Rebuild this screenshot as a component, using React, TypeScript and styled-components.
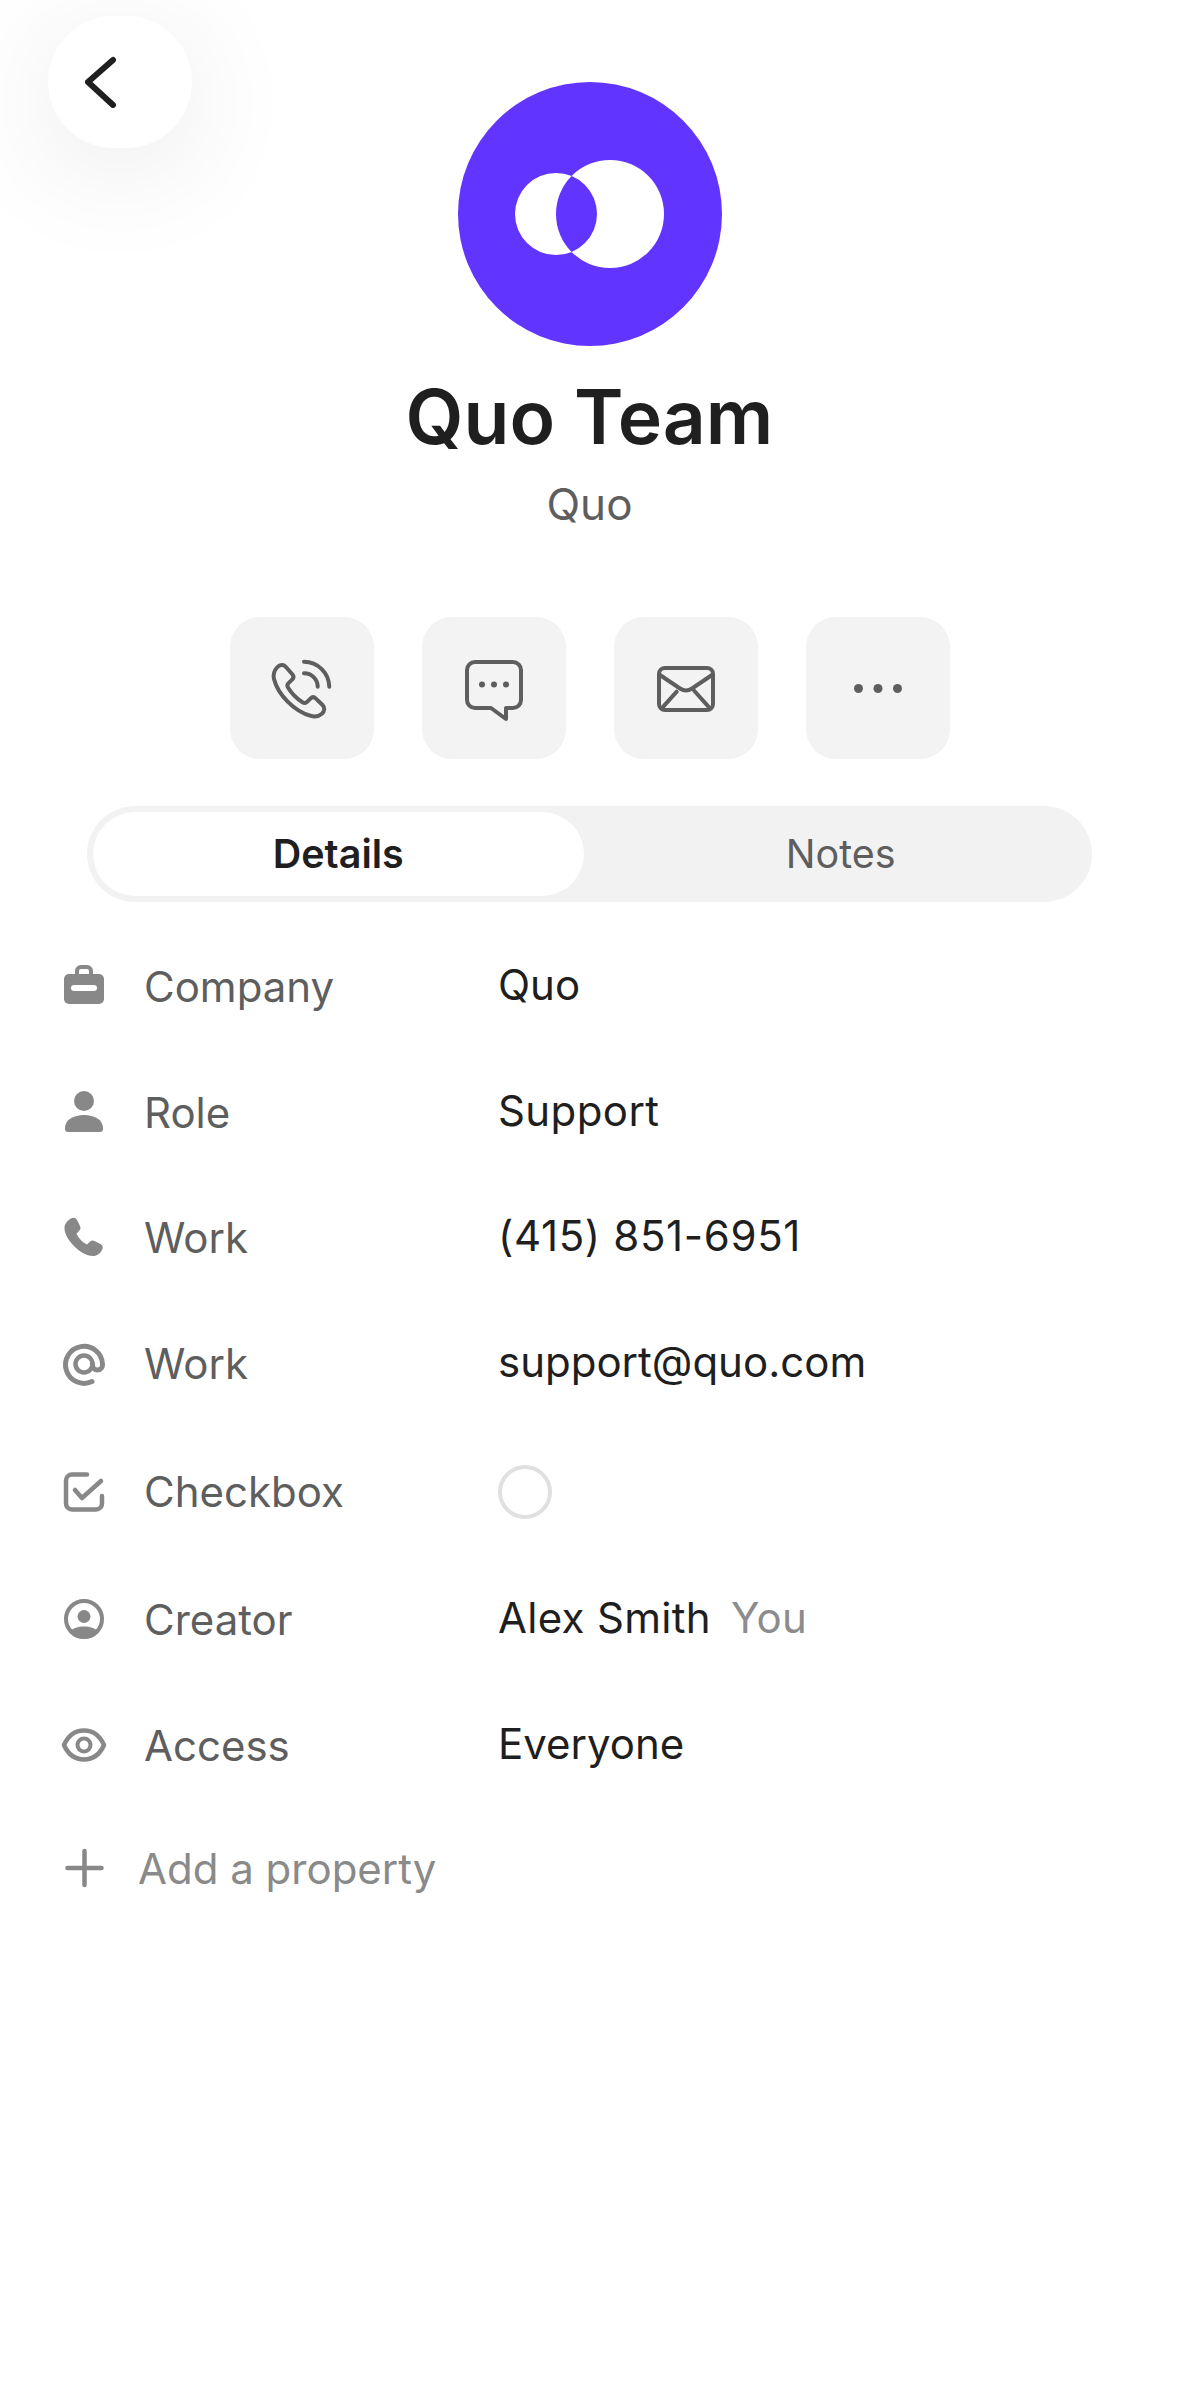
import React from "react";
import styled, { createGlobalStyle } from "styled-components";

const Global = createGlobalStyle`
  html, body { margin: 0; padding: 0; background: #fff; }
  body { font-family: Inter, "Noto Sans", sans-serif; -webkit-font-smoothing: antialiased; }
`;

const Page = styled.div`
  position: relative;
  width: 1179px;
  height: 2396px;
  overflow: hidden;
  background: #fff;
  display: flex;
  flex-direction: column;
  align-items: center;
  padding-top: 82px;
  box-sizing: border-box;
`;

const BackButton = styled.button`
  position: absolute;
  left: 48px;
  top: 16px;
  width: 144px;
  height: 132px;
  border: 0;
  border-radius: 66px;
  background: #fff;
  padding: 0 0 0 36px;
  display: flex;
  align-items: center;
  justify-content: flex-start;
  box-shadow: 0 20px 120px rgba(0, 0, 0, 0.09);
`;

const Avatar = styled.div`
  width: 264px;
  height: 264px;
  border-radius: 50%;
  background: #6234ff;
  display: flex;
  align-items: center;
  justify-content: center;
`;

const Title = styled.h1`
  margin: 28px 0 0;
  font-size: 75px;
  line-height: 86px;
  font-weight: 600;
  color: #1f1f1f;
  letter-spacing: 0;
`;

const Subtitle = styled.div`
  margin-top: 16px;
  font-size: 44px;
  line-height: 56px;
  font-weight: 400;
  color: #5e5e5e;
`;

const Actions = styled.div`
  margin-top: 85px;
  display: flex;
  gap: 48px;
`;

const ActionButton = styled.button`
  width: 144px;
  height: 142px;
  border: 0;
  padding: 0;
  border-radius: 30px;
  background: #f3f3f3;
  display: flex;
  align-items: center;
  justify-content: center;
`;

const Tabs = styled.div`
  margin-top: 47px;
  width: 1005px;
  height: 96px;
  box-sizing: border-box;
  padding: 6px;
  border-radius: 48px;
  background: #f2f2f2;
  display: flex;
  gap: 12px;
`;

const Tab = styled.div<{ $active?: boolean }>`
  flex: 1;
  border-radius: 42px;
  display: flex;
  align-items: center;
  justify-content: center;
  font-size: 39.5px;
  font-weight: ${(p) => (p.$active ? 600 : 400)};
  color: ${(p) => (p.$active ? "#1f1f1f" : "#5e5e5e")};
  background: ${(p) => (p.$active ? "#fff" : "transparent")};
`;

const List = styled.div`
  margin-top: 22px;
  width: 100%;
  box-sizing: border-box;
  padding-left: 60px;
  display: flex;
  flex-direction: column;
`;

const Row = styled.div<{ $h: number }>`
  height: ${(p) => p.$h}px;
  display: flex;
  align-items: center;
`;

const Label = styled.div`
  width: 354px;
  margin-left: 36px;
  padding-bottom: 2px;
  font-size: 42px;
  font-weight: 400;
  color: #5e5e5e;
`;

const Value = styled.div<{ $track?: number }>`
  display: flex;
  gap: 20px;
  padding-bottom: 5px;
  font-size: 42px;
  font-weight: 400;
  letter-spacing: ${(p) => p.$track ?? 0}px;
  color: #1f1f1f;
`;

const Muted = styled.span`
  color: #8c8c8c;
`;

const Radio = styled.div`
  width: 54px;
  height: 54px;
  box-sizing: border-box;
  border-radius: 50%;
  border: 4px solid #e0e0e0;
`;

const AddLabel = styled.div`
  margin-left: 30px;
  font-size: 42px;
  font-weight: 400;
  color: #8a8a8a;
`;

const Glyph = styled.svg`
  flex: none;
  display: block;
`;

const ActionSvg: React.FC<{ children: React.ReactNode }> = ({ children }) => (
  <Glyph width="72" height="72" viewBox="0 0 72 72" fill="none" stroke="#5e5e5e" strokeWidth="4" strokeLinecap="round" strokeLinejoin="round">
    {children}
  </Glyph>
);

const RowSvg: React.FC<{ children: React.ReactNode }> = ({ children }) => (
  <Glyph width="48" height="48" viewBox="0 0 48 48" fill="#888" stroke="none">
    {children}
  </Glyph>
);

const Line = { fill: "none", stroke: "#888", strokeLinecap: "round", strokeLinejoin: "round" } as const;

const rows: { h: number; label: string; value?: string; extra?: string; track?: number; radio?: boolean; icon: React.ReactNode }[] = [
  {
    h: 126,
    label: "Company",
    value: "Quo",
    icon: (
      <>
        <path {...Line} strokeWidth="4" d="M17 14V8a4 4 0 0 1 4-4h6a4 4 0 0 1 4 4v6" />
        <rect x="4" y="11" width="40" height="30" rx="5" />
        <rect x="11" y="22" width="26" height="6" rx="3" fill="#fff" />
      </>
    ),
  },
  {
    h: 126,
    label: "Role",
    value: "Support",
    track: 0.4,
    icon: (
      <>
        <circle cx="24" cy="12" r="10" />
        <path d="M5 39c0-8 8.5-13 19-13s19 5 19 13v1a3 3 0 0 1-3 3H8a3 3 0 0 1-3-3z" />
      </>
    ),
  },
  {
    h: 124,
    label: "Work",
    value: "(415) 851-6951",
    track: 0.65,
    icon: (
      <path d="M11 4.500c2.500-1.500 5-.5 6 1.500l3 6c1 2 .5 3.500-1 5l-2.500 2.500c1.500 4 6 9 10.500 11l2.500-2.500c1.500-1.500 3-2 5-1l6 3c2 1 3 3.500 1.500 6-2 3.500-5 6-9 6C20 42 4 24 4.500 14c0-4 3-7.500 6.500-9.500z" />
    ),
  },
  {
    h: 128,
    label: "Work",
    value: "support@quo.com",
    icon: (
      <>
        <path {...Line} strokeWidth="5" d="M32 41.500A18.500 18.500 0 1 1 42.500 24v1a5 5 0 0 1-10 0v-1" />
        <circle {...Line} strokeWidth="4.500" cx="24" cy="24" r="8.500" />
      </>
    ),
  },
  {
    h: 128,
    label: "Checkbox",
    radio: true,
    icon: (
      <>
        <path {...Line} strokeWidth="4.500" d="M27 6.500H12a6 6 0 0 0-6 6v23a6 6 0 0 0 6 6h24a6 6 0 0 0 6-6V28" />
        <path {...Line} strokeWidth="4.500" d="M15 22l7 8L41 13" />
      </>
    ),
  },
  {
    h: 128,
    label: "Creator",
    value: "Alex Smith",
    extra: "You",
    track: 0.3,
    icon: (
      <>
        <circle {...Line} strokeWidth="4" cx="24" cy="23" r="18" />
        <circle cx="24" cy="20.500" r="6.500" />
        <path d="M9 36c3-3.500 9-5.500 15-5.500S36 32.500 39 36a20 20 0 0 1-30 0z" />
      </>
    ),
  },
  {
    h: 124,
    label: "Access",
    value: "Everyone",
    icon: (
      <>
        <path {...Line} strokeWidth="4.500" d="M4 23C8 14 15 8.500 24 8.500S40 14 44 23c-4 9-11 14.500-20 14.500S8 32 4 23z" />
        <circle {...Line} strokeWidth="4" cx="24" cy="23" r="6.500" />
      </>
    ),
  },
];

export default function App() {
  return (
    <Page>
      <Global />
      <BackButton aria-label="Back">
        <Glyph width="34" height="52" viewBox="0 0 34 52" fill="none" stroke="#1f1f1f" strokeWidth="6" strokeLinecap="round" strokeLinejoin="round">
          <path d="M29 4L4 26l25 23" />
        </Glyph>
      </BackButton>

      <Avatar>
        <Glyph width="150" height="108" viewBox="0 0 150 108">
          <path
            fill="#fff"
            fillRule="evenodd"
            d="M41 13a41 41 0 1 0 0 82 41 41 0 0 0 0-82z M95 0a54 54 0 1 0 0 108 54 54 0 0 0 0-108z"
          />
        </Glyph>
      </Avatar>
      <Title>Quo Team</Title>
      <Subtitle>Quo</Subtitle>

      <Actions>
        <ActionButton aria-label="Call">
          <ActionSvg>
            <path d="M11 15.500c2.500-3 6.500-3.200 8.700-.7l6.600 7.500c1.600 1.800 1.400 3.800-.2 5.300l-3.600 3.500c-1.400 1.400-1.500 2.800-.5 4.500 3 5 8.600 11 14.500 14.700 1.800 1.100 3.200 1 4.600-.4l3.300-3.300c1.600-1.600 3.600-1.800 5.300-.2l6.800 6.600c2.600 2.500 2.200 6.400-.6 8.700-3.200 2.700-7.700 3.400-11.500 2C29 60 12 43 8 27c-1-4.300.3-8.500 3-11.500z" />
            <path d="M38 9.700A25.500 25.500 0 0 1 63.300 34.700" />
            <path d="M38 21.300A13.500 13.500 0 0 1 51.700 34.700" />
          </ActionSvg>
        </ActionButton>
        <ActionButton aria-label="Message">
          <ActionSvg>
            <path d="M17 10h38a8 8 0 0 1 8 8v30a8 8 0 0 1-8 8h-7v11L33 56H17a8 8 0 0 1-8-8V18a8 8 0 0 1 8-8z" />
            <g fill="#5e5e5e" stroke="none">
              <circle cx="24" cy="32.500" r="3" />
              <circle cx="36" cy="32.500" r="3" />
              <circle cx="48" cy="32.500" r="3" />
            </g>
          </ActionSvg>
        </ActionButton>
        <ActionButton aria-label="Email">
          <ActionSvg>
            <rect x="9" y="16" width="54" height="42" rx="6" />
            <path d="M10 23l20 13.500q6 4 12 0L62 23" />
            <path d="M26.700 39.700L11.700 56.300M44 38.500l16 17.800" />
          </ActionSvg>
        </ActionButton>
        <ActionButton aria-label="More">
          <ActionSvg>
            <g fill="#5e5e5e" stroke="none">
              <circle cx="16.500" cy="36.500" r="4.500" />
              <circle cx="36" cy="36.500" r="4.500" />
              <circle cx="55.500" cy="36.500" r="4.500" />
            </g>
          </ActionSvg>
        </ActionButton>
      </Actions>

      <Tabs>
        <Tab $active>Details</Tab>
        <Tab>Notes</Tab>
      </Tabs>

      <List>
        {rows.map((r, i) => (
          <Row key={i} $h={r.h}>
            <RowSvg>{r.icon}</RowSvg>
            <Label>{r.label}</Label>
            {r.radio ? (
              <Radio />
            ) : (
              <Value $track={r.track}>
                <span>{r.value}</span>
                {r.extra && <Muted>{r.extra}</Muted>}
              </Value>
            )}
          </Row>
        ))}
        <Row $h={120}>
          <RowSvg>
            <path {...Line} strokeWidth="4.500" d="M7.500 24h34M24.500 7v34" />
          </RowSvg>
          <AddLabel>Add a property</AddLabel>
        </Row>
      </List>
    </Page>
  );
}
